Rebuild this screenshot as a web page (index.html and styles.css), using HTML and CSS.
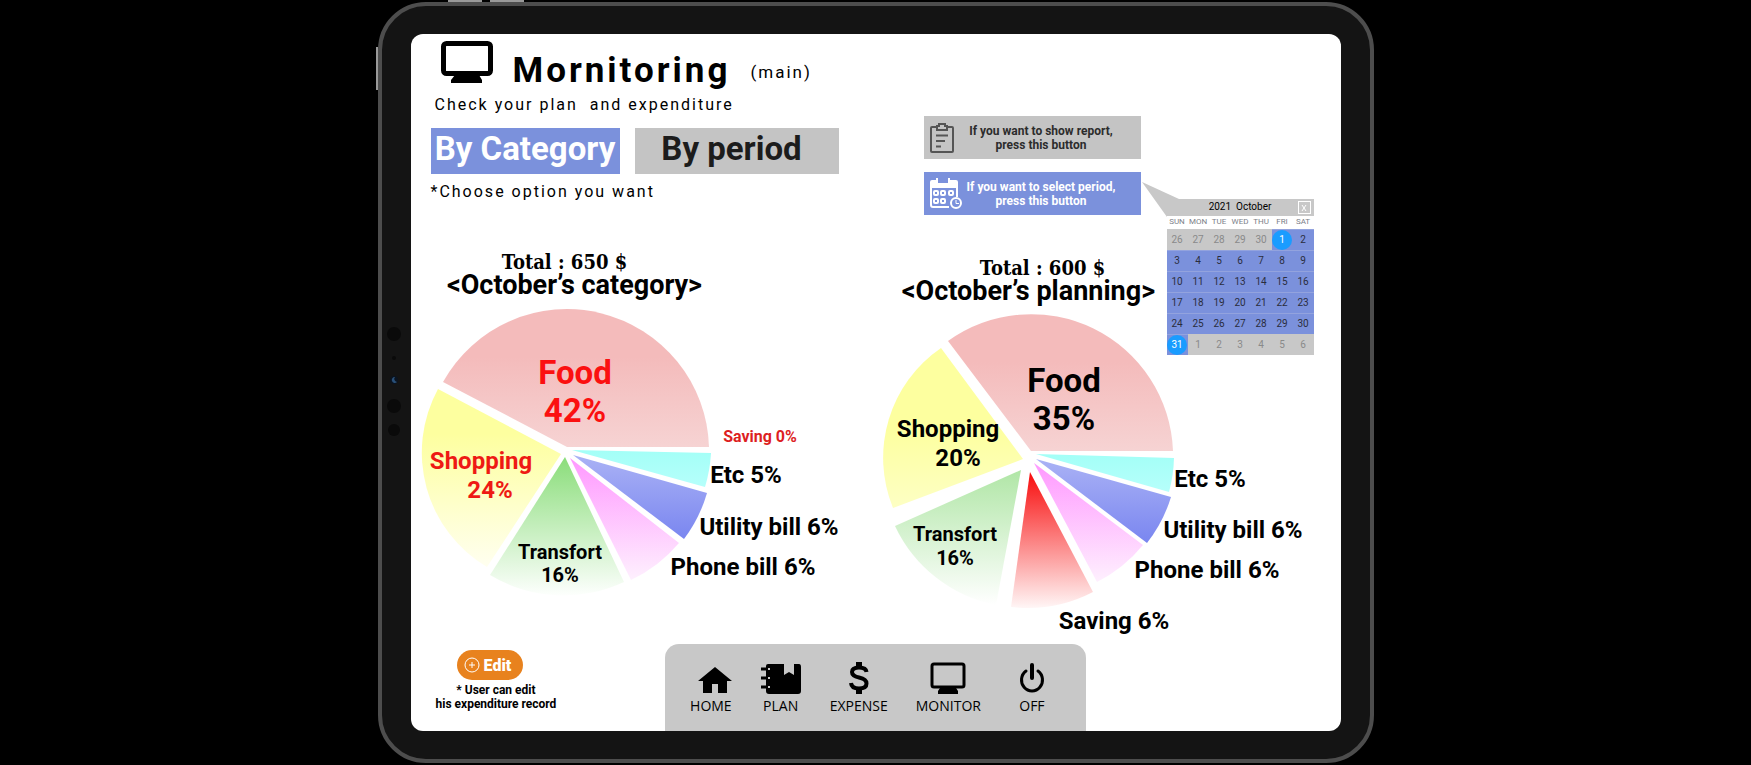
FILE: index.html
```html
<!DOCTYPE html>
<html lang="en">
<head>
<meta charset="utf-8">
<title>Mornitoring</title>
<link rel="stylesheet" href="styles.css">
</head>
<body>
<div class="device">
  <span class="key key-side"></span>
  <span class="key key-up"></span>
  <span class="key key-down"></span>
  <svg class="sensors" width="16" height="120" viewBox="0 0 16 120" aria-hidden="true">
    <circle cx="8" cy="9" r="7" fill="#0a0a0a"/><circle cx="8" cy="33" r="2" fill="#0a0a0a"/>
    <circle cx="8" cy="55" r="4" fill="#0b1420"/><path d="M9 52a3 3 0 1 0 2 5a3 3 0 0 1-2-5z" fill="#2a5078"/>
    <circle cx="8" cy="81" r="7" fill="#0a0a0a"/><circle cx="8" cy="105" r="6" fill="#0a0a0a"/>
  </svg>
  <main class="screen">
    <div class="columns">
      <section class="left">
        <header class="head">
          <svg class="head-icon" width="52" height="42" viewBox="0 0 52 42" aria-hidden="true">
            <rect x="2.500" y="2.500" width="47" height="30" rx="3" fill="none" stroke="#000" stroke-width="5"/>
            <path d="M14 34h24l3 5v3H10v-3z"/>
          </svg>
          <h1 class="title">Mornitoring</h1>
          <span class="tag">(main)</span>
        </header>
        <p class="lead">Check your plan&nbsp; and expenditure</p>
        <div class="tabs">
          <button class="tab tab-on" type="button">By Category</button>
          <button class="tab tab-off" type="button">By period</button>
        </div>
        <p class="hint">*Choose option you want</p>
        <div class="caption caption-left">
          <p class="total">Total : 650 $</p>
          <h2 class="name">&lt;October’s category&gt;</h2>
        </div>
        <svg class="chart" viewBox="411 297 449 347" role="img" aria-label="October's category">
          <defs>
            <linearGradient id="food" x1="0" y1="0" x2="0" y2="1"><stop offset=".35" stop-color="#f4bbbb"/><stop offset="1" stop-color="#f6d3d3"/></linearGradient>
            <linearGradient id="shop" x1="0" y1="0" x2="0" y2="1"><stop offset=".25" stop-color="#fdff9f"/><stop offset="1" stop-color="#fffff0"/></linearGradient>
            <linearGradient id="shopB" x1="0" y1="0" x2="0" y2="1"><stop offset=".5" stop-color="#fdff9f"/><stop offset="1" stop-color="#fdffc4"/></linearGradient>
            <linearGradient id="trans" x1="0" y1="0" x2="0" y2="1"><stop offset="0" stop-color="#8add7a"/><stop offset="1" stop-color="#fdfffd"/></linearGradient>
            <linearGradient id="transB" x1="0" y1="0" x2="0" y2="1"><stop offset="0" stop-color="#b0e6a6"/><stop offset="1" stop-color="#ffffff"/></linearGradient>
            <linearGradient id="phone" x1="0" y1="0" x2="0" y2="1"><stop offset="0" stop-color="#ff98ff"/><stop offset="1" stop-color="#fef0fe"/></linearGradient>
            <linearGradient id="util" x1="0" y1="0" x2="0" y2="1"><stop offset="0" stop-color="#aab2f5"/><stop offset="1" stop-color="#7a86f0"/></linearGradient>
            <linearGradient id="etc" x1="0" y1="0" x2="0" y2="1"><stop offset="0" stop-color="#a3fff7"/><stop offset="1" stop-color="#b6fffb"/></linearGradient>
            <linearGradient id="save" x1="0" y1="0" x2="0" y2="1"><stop offset="0" stop-color="#f80c0c"/><stop offset="1" stop-color="#fff6f6"/></linearGradient>
          </defs>
          <path fill="url(#food)" d="M567 447L443 382A142 142 0 0 1 709 447Z"/>
          <path fill="url(#shop)" d="M561 454L438 389A133 133 0 0 0 487 567Z"/>
          <path fill="url(#trans)" d="M565 457L490 575A142 142 0 0 0 624 582Z"/>
          <path fill="url(#phone)" d="M570 458L631 580A142 142 0 0 0 679 543Z"/>
          <path fill="url(#util)" d="M573 455L684 539A142 142 0 0 0 707 493Z"/>
          <path fill="url(#etc)" d="M572 450L705 487A142 142 0 0 0 711 453Z"/>
          <g class="labels">
            <g class="hot"><text class="t-xl" x="575" y="384">Food</text><text class="t-xl" x="575" y="422">42%</text></g>
            <g class="warm"><text class="t-lg" x="481" y="469">Shopping</text><text class="t-lg" x="490" y="498">24%</text></g>
            <text class="t-md" x="560" y="559">Transfort</text><text class="t-md" x="560" y="582">16%</text>
            <text class="t-sm saving-zero" x="760" y="442">Saving 0%</text>
            <text class="t-lg" x="746" y="483">Etc 5%</text>
            <text class="t-lg" x="769" y="535">Utility bill 6%</text>
            <text class="t-lg" x="743" y="575">Phone bill 6%</text>
          </g>
        </svg>
      </section>
      <section class="right">
        <div class="actions">
          <button class="action action-report" type="button">
            <svg width="28" height="32" viewBox="0 0 28 32" fill="none" stroke="#555" stroke-width="2" aria-hidden="true">
              <path d="M9 5H4Q3 5 3 6V29Q3 30 4 30H24Q25 30 25 29V6Q25 5 24 5H19"/>
              <path d="M9 8V4H11V2H17V4H19V8Z"/><path d="M8 13.500h12M8 19h9M8 24.500h5"/>
            </svg>
            <span>If you want to show report,<br>press this button</span>
          </button>
          <div class="picker">
            <button class="action action-period" type="button">
              <svg width="34" height="34" viewBox="0 0 34 34" aria-hidden="true">
                <path d="M4 3h4V1h2v5h10V1h2v2h6q2 0 2 2v6H2V5q0-2 2-2z" fill="#fff"/>
                <path d="M3 11v17q0 2 2 2h16M29 11v9" fill="none" stroke="#fff" stroke-width="2"/>
                <g fill="none" stroke="#fff" stroke-width="2"><rect x="6" y="14" width="4" height="4" rx="1"/><rect x="13" y="14" width="4" height="4" rx="1"/><rect x="21" y="14" width="4" height="4" rx="1"/><rect x="6" y="22" width="4" height="4" rx="1"/><rect x="13" y="22" width="4" height="4" rx="1"/></g>
                <circle cx="28" cy="26" r="5" fill="#7b91dc" stroke="#fff" stroke-width="2"/><path d="M28 23v3.500h3" fill="none" stroke="#fff"/>
              </svg>
              <span>If you want to select period,<br>press this button</span>
            </button>
            <svg class="pointer" width="38" height="35" viewBox="0 0 38 35" aria-hidden="true"><path d="M0 0L37 17L38 35H25Z" fill="#c8c8c8"/></svg>
            <div class="calendar">
              <div class="cal-head">
                <span class="cal-title">2021&nbsp; October</span>
                <button class="cal-close" type="button" aria-label="Close"><svg width="6" height="6" viewBox="0 0 6 6"><path d="M1 0l4 6M5 0l-4 6" stroke="#fff"/></svg></button>
              </div>
              <table class="cal">
                <thead><tr><th>SUN</th><th>MON</th><th>TUE</th><th>WED</th><th>THU</th><th>FRI</th><th>SAT</th></tr></thead>
                <tbody>
                  <tr><td class="out">26</td><td class="out">27</td><td class="out">28</td><td class="out">29</td><td class="out">30</td><td><b class="pick">1</b></td><td>2</td></tr>
                  <tr><td>3</td><td>4</td><td>5</td><td>6</td><td>7</td><td>8</td><td>9</td></tr>
                  <tr><td>10</td><td>11</td><td>12</td><td>13</td><td>14</td><td>15</td><td>16</td></tr>
                  <tr><td>17</td><td>18</td><td>19</td><td>20</td><td>21</td><td>22</td><td>23</td></tr>
                  <tr><td>24</td><td>25</td><td>26</td><td>27</td><td>28</td><td>29</td><td>30</td></tr>
                  <tr><td><b class="pick">31</b></td><td class="out">1</td><td class="out">2</td><td class="out">3</td><td class="out">4</td><td class="out">5</td><td class="out">6</td></tr>
                </tbody>
              </table>
            </div>
          </div>
        </div>
        <div class="caption caption-right">
          <p class="total">Total : 600 $</p>
          <h2 class="name">&lt;October’s planning&gt;</h2>
        </div>
        <svg class="chart" viewBox="860 303 481 341" role="img" aria-label="October's planning">
          <path fill="url(#food)" d="M1031 451L948 341A142 142 0 0 1 1173 451Z"/>
          <path fill="url(#shopB)" d="M1023 459L941 348A133 133 0 0 0 893 508Z"/>
          <path fill="url(#transB)" d="M1021 470L895 526A142 142 0 0 0 996 605Z"/>
          <path fill="url(#save)" d="M1030 472L1011 607A142 142 0 0 0 1093 592Z"/>
          <path fill="url(#phone)" d="M1034 463L1097 582A142 142 0 0 0 1143 545Z"/>
          <path fill="url(#util)" d="M1036 459L1147 543A142 142 0 0 0 1171 497Z"/>
          <path fill="url(#etc)" d="M1036 454L1169 492A142 142 0 0 0 1174 458Z"/>
          <g class="labels">
            <text class="t-xl" x="1064" y="392">Food</text><text class="t-xl" x="1064" y="430">35%</text>
            <text class="t-lg" x="948" y="437">Shopping</text><text class="t-lg" x="958" y="466">20%</text>
            <text class="t-md" x="955" y="541">Transfort</text><text class="t-md" x="955" y="565">16%</text>
            <text class="t-lg" x="1210" y="487">Etc 5%</text>
            <text class="t-lg" x="1233" y="538">Utility bill 6%</text>
            <text class="t-lg" x="1207" y="578">Phone bill 6%</text>
            <text class="t-lg" x="1114" y="629">Saving 6%</text>
          </g>
        </svg>
      </section>
    </div>
    <footer class="foot">
      <div class="edit-box">
        <button class="edit" type="button">
          <svg width="16" height="16" viewBox="0 0 16 16" fill="none" stroke="#fff" aria-hidden="true"><circle cx="8" cy="8" r="7"/><path d="M8 5v6M5 8h6"/></svg>Edit
        </button>
        <p class="edit-note">* User can edit<br>his expenditure record</p>
      </div>
      <nav class="nav">
        <a class="item item-home" href="#home">
          <svg width="34" height="32" viewBox="0 0 34 32" aria-hidden="true"><path d="M17 5L34 19H29V31H20V22H14V31H5V19H0Z"/></svg>HOME</a>
        <a class="item" href="#plan">
          <svg width="42" height="32" viewBox="0 0 42 32" aria-hidden="true"><path d="M8 2H24V13L29 10L34 13V2H39Q41 2 41 5V29Q41 32 38 32H9Q6 32 6 29V26H10V24H6V17H10V15H6V8H10V6H6V4Q6 2 8 2Z"/><path d="M1 7h7M1 16h7M1 25h7" stroke="#000" stroke-width="3"/></svg>PLAN</a>
        <a class="item" href="#expense">
          <svg width="20" height="32" viewBox="0 0 20 32" fill="none" stroke="#000" stroke-width="4" aria-hidden="true"><path d="M17.500 10Q17 5.500 10 5.500Q3 5.500 3 10Q3 14 10 15.500Q17.500 17 17.500 21.500Q17.500 26.500 10 26.500Q2.500 26.500 2 21"/><path d="M10 0v6M10 26v6" stroke-width="6"/></svg>EXPENSE</a>
        <a class="item" href="#monitor">
          <svg width="36" height="32" viewBox="0 0 36 32" aria-hidden="true"><rect x="2" y="2" width="32" height="23" rx="2" fill="none" stroke="#000" stroke-width="3"/><path d="M10 26h16l2 3v3H8v-3z"/></svg>MONITOR</a>
        <a class="item item-off" href="#off">
          <svg width="26" height="32" viewBox="0 0 26 32" fill="none" stroke="#000" stroke-width="3" stroke-linecap="round" aria-hidden="true"><path d="M7 9A10.500 11 0 1 0 19 9"/><path d="M13 3v13" stroke-width="4"/></svg>OFF</a>
      </nav>
    </footer>
  </main>
</div>
</body>
</html>
```
FILE: styles.css
```css
* { box-sizing: border-box; }
body { margin: 0; background: #000; color: #000; font-family: Roboto, sans-serif; }
h1, h2, p { margin: 0; }
button { border: 0; padding: 0; font-family: inherit; cursor: pointer; }
svg { display: block; flex: none; }

.device {
  position: relative;
  max-width: 996px;
  margin: 2px auto 0;
  padding: 28px 29px;
  border: 4px solid #4d4d4d;
  border-radius: 48px;
  background: #141414;
}
.key { position: absolute; background: #999; }
.key-side { left: -6px; top: 41px; width: 2px; height: 43px; }
.key-up { left: 66px; top: -6px; width: 34px; height: 2px; }
.key-down { left: 108px; top: -6px; width: 34px; height: 2px; }
.sensors { position: absolute; left: 4px; top: 319px; }

.screen { display: flex; flex-direction: column; background: #fff; border-radius: 12px; overflow: hidden; }
.columns { display: grid; grid-template-columns: 449fr 481fr; }
.chart { width: 100%; height: auto; }

.head { display: flex; align-items: flex-start; padding: 7px 0 0 30px; }
.title { margin: 10px 0 0 20px; font-size: 35px; line-height: 40px; font-weight: 700; letter-spacing: 3px; }
.tag { margin: 21px 0 0 20px; font-size: 17px; }
.tag, .lead, .hint { line-height: 20px; letter-spacing: 2px; }
.lead { margin: 4px 0 0 24px; font-size: 16px; }
.hint { margin: 8px 0 0 20px; font-size: 16px; }
.tabs { display: flex; gap: 15px; margin: 13px 21px 0 20px; }
.tab { height: 46px; padding-bottom: 4px; font-size: 33px; line-height: 40px; font-weight: 700; white-space: nowrap; }
.tab-on { flex: 0 0 189px; background: #7b91dc; color: #fff; }
.tab-off { flex: 1; padding-right: 10px; background: #c4c4c4; color: #1c1c1c; }

.caption { width: 256px; white-space: nowrap; display: flex; flex-direction: column; align-items: center; }
.caption-left { margin: 50px 0 0 36px; }
.caption-right { margin: 43px 0 0 41px; }
.caption-left .total { padding-right: 20px; }
.caption-right .total { padding-left: 28px; }
.total { font: 700 20px/21px "DejaVu Serif Condensed", "DejaVu Serif", serif; }
.name { font-size: 27px; line-height: 24px; font-weight: 700; }

.labels { text-anchor: middle; font-weight: 700; }
.t-xl { font-size: 33px; }
.t-lg { font-size: 24px; }
.t-md { font-size: 20px; }
.t-sm { font-size: 16px; }
.hot { fill: #fb1010; }
.warm { fill: #ee1a14; }
.saving-zero { fill: #dd1f1f; }

.right { padding-top: 82px; }
.actions { display: grid; gap: 13px; width: 217px; margin-left: 64px; }
.action { display: flex; align-items: center; width: 100%; height: 43px; padding-left: 4px; font-size: 12px; line-height: 14px; font-weight: 700; white-space: nowrap; }
.action span { flex: 1; }
.action-report { padding-right: 14px; background: #c4c4c4; color: #2c2c2c; }
.action-period { padding-right: 20px; background: #7b91dc; color: #fff; }
.picker { position: relative; }
.pointer { position: absolute; left: 218px; top: 10px; }
.calendar { position: absolute; left: 243px; top: 27px; width: 147px; z-index: 1; }
.cal-head { position: relative; height: 17px; background: #c8c8c8; text-align: center; font-size: 10px; line-height: 16px; }
.cal-close { position: absolute; right: 3px; top: 2px; display: grid; place-items: center; width: 13px; height: 13px; border: 1px solid #fff; background: none; }
.cal { width: 100%; table-layout: fixed; border-collapse: collapse; background: #fff; text-align: center; }
.cal th { height: 13px; padding: 0; font-size: 8px; line-height: 12px; font-weight: 400; color: #7c8088; }
.cal td { height: 21px; padding: 0; border-top: 1px solid #93a3de; background: #7b91dc; color: #2a2d3c; font-size: 10px; line-height: 20px; }
.cal .out { border-color: #c8c8c8; background: #c8c8c8; color: #8a8a8a; }
.pick { display: block; width: 20px; height: 20px; margin: 0 auto; border-radius: 50%; background: #1a9cff; color: #fff; font-weight: 400; }

.foot { display: grid; grid-template-columns: 1fr auto 1fr; }
.edit-box { justify-self: start; display: flex; flex-direction: column; align-items: center; padding: 6px 0 0 25px; }
.edit { display: flex; align-items: center; gap: 4px; height: 30px; margin-right: 12px; padding: 0 12px 0 7px; border-radius: 15px; background: #e8821e; color: #fff; font-size: 16px; font-weight: 900; }
.edit-note { margin-top: 3px; font-size: 12px; line-height: 14px; font-weight: 700; text-align: center; }
.nav { display: flex; gap: 28px; height: 87px; padding: 18px 31px 0 25px; border-radius: 14px 14px 0 0; background: #c8c8c8; }
.item { display: flex; flex-direction: column; align-items: center; gap: 2px; color: #000; font-family: "Open Sans", sans-serif; font-size: 14px; line-height: 20px; text-decoration: none; }
.item-home { align-items: flex-end; }
.item-off { width: 46px; }
```
